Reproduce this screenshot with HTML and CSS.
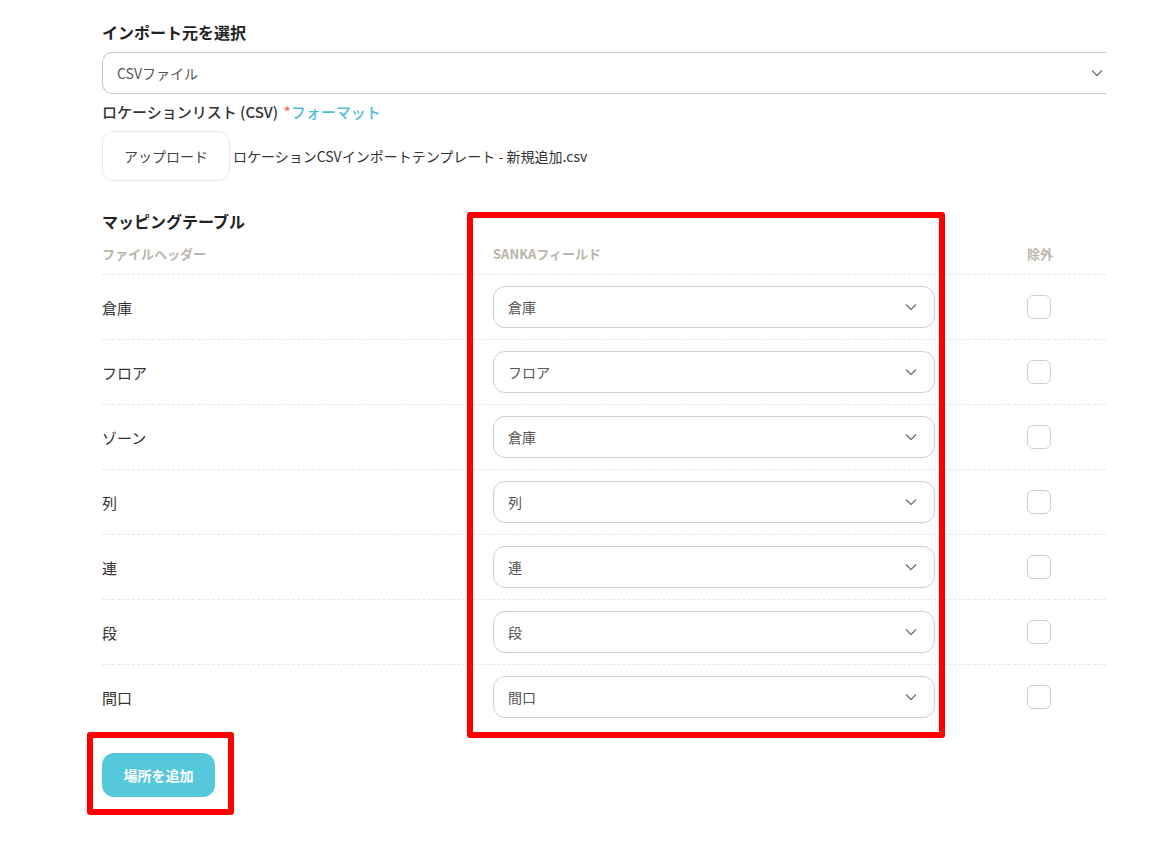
FILE: index.html
```html
<!DOCTYPE html>
<html lang="ja">
<head>
<meta charset="utf-8">
<link rel="stylesheet" href="styles.css">
</head>
<body>
<div class="page">
  <h2 class="title">インポート元を選択</h2>
  <div class="source-select">
    <span>CSVファイル</span>
    <svg class="chev" viewBox="0 0 12 8"><path d="M1 1.5 6 6.5 11 1.5"/></svg>
  </div>
  <div class="label">ロケーションリスト (CSV) <span class="req">*</span><span class="fmt">フォーマット</span></div>
  <div class="upload-row">
    <div class="upload-btn">アップロード</div>
    <span class="filename">ロケーションCSVインポートテンプレート - 新規追加.csv</span>
  </div>

  <section class="mapping">
    <h2 class="title map-title">マッピングテーブル</h2>
    <div class="grid head">
      <div>ファイルヘッダー</div>
      <div>SANKAフィールド</div>
      <div>除外</div>
    </div>
    <div class="grid row"><div class="name">倉庫</div><div class="sel"><span>倉庫</span><svg class="chev" viewBox="0 0 12 8"><path d="M1 1.5 6 6.5 11 1.5"/></svg></div><div><span class="check"></span></div></div>
    <div class="grid row"><div class="name">フロア</div><div class="sel"><span>フロア</span><svg class="chev" viewBox="0 0 12 8"><path d="M1 1.5 6 6.5 11 1.5"/></svg></div><div><span class="check"></span></div></div>
    <div class="grid row"><div class="name">ゾーン</div><div class="sel"><span>倉庫</span><svg class="chev" viewBox="0 0 12 8"><path d="M1 1.5 6 6.5 11 1.5"/></svg></div><div><span class="check"></span></div></div>
    <div class="grid row"><div class="name">列</div><div class="sel"><span>列</span><svg class="chev" viewBox="0 0 12 8"><path d="M1 1.5 6 6.5 11 1.5"/></svg></div><div><span class="check"></span></div></div>
    <div class="grid row"><div class="name">連</div><div class="sel"><span>連</span><svg class="chev" viewBox="0 0 12 8"><path d="M1 1.5 6 6.5 11 1.5"/></svg></div><div><span class="check"></span></div></div>
    <div class="grid row"><div class="name">段</div><div class="sel"><span>段</span><svg class="chev" viewBox="0 0 12 8"><path d="M1 1.5 6 6.5 11 1.5"/></svg></div><div><span class="check"></span></div></div>
    <div class="grid row"><div class="name">間口</div><div class="sel"><span>間口</span><svg class="chev" viewBox="0 0 12 8"><path d="M1 1.5 6 6.5 11 1.5"/></svg></div><div><span class="check"></span></div></div>
    <div class="mark mark-fields"></div>
  </section>

  <div class="actions">
    <button class="add-btn">場所を追加</button>
    <div class="mark mark-btn"></div>
  </div>
</div>
</body>
</html>
```

FILE: styles.css
```css
* { box-sizing: border-box; }
html, body { margin: 0; background: #fff; }
body {
  font-family: "Noto Sans CJK JP", "Noto Sans", sans-serif;
  color: #333;
}
.page {
  width: 1106px;
  padding: 21px 0 40px 102px;
}
.title {
  margin: 0;
  font-size: 16px;
  line-height: 22px;
  font-weight: 700;
  color: #222;
}
.source-select {
  margin-top: 9px;
  height: 42px;
  border: 1px solid #c9c9c9;
  border-right: none;
  border-radius: 10px 0 0 10px;
  display: flex;
  align-items: center;
  justify-content: space-between;
  padding: 0 3px 0 14px;
  font-size: 14px;
  color: #555;
}
.chev {
  width: 12px;
  height: 8px;
  fill: none;
  stroke: #777;
  stroke-width: 1.4;
}
.label {
  margin-top: 7px;
  font-size: 15px;
  line-height: 22px;
  color: #333;
  font-weight: 500;
}
.req { color: #ef6b4f; margin-left: 2px; }
.fmt { color: #4fbfd6; }
.upload-row {
  margin-top: 8px;
  display: flex;
  align-items: center;
  gap: 3px;
}
.upload-btn {
  width: 128px;
  height: 50px;
  border: 1px solid #e8e8e8;
  border-radius: 12px;
  display: flex;
  align-items: center;
  justify-content: center;
  font-size: 14px;
  color: #444;
}
.filename { font-size: 14px; color: #333; }

.mapping {
  position: relative;
  margin-top: 29px;
}
.map-title { line-height: 22px; }
.grid {
  display: grid;
  grid-template-columns: 391px 534px 1fr;
  align-items: center;
}
.head {
  height: 42px;
  font-size: 13px;
  font-weight: 700;
  color: #bcb6ab;
}
.row {
  height: 65px;
  border-top: 1px dashed #e6e6e6;
  font-size: 15px;
}
.name { color: #333; }
.sel {
  width: 442px;
  height: 42px;
  border: 1px solid #cfcfcf;
  border-radius: 12px;
  display: flex;
  align-items: center;
  justify-content: space-between;
  padding: 0 17px 0 14px;
  font-size: 14px;
  color: #555;
}
.check {
  display: block;
  width: 24px;
  height: 24px;
  border: 1.5px solid #cfcfcf;
  border-radius: 6px;
}
.mark {
  position: absolute;
  border: 6px solid #ff0000;
  border-radius: 3px;
  pointer-events: none;
}
.mark-fields {
  left: 365px;
  top: 2px;
  width: 478px;
  height: 526px;
}
.actions {
  position: relative;
  margin-top: 24px;
}
.add-btn {
  width: 113px;
  height: 44px;
  border: none;
  border-radius: 12px;
  background: #55c8db;
  color: #fff;
  font-family: inherit;
  font-size: 14px;
  font-weight: 700;
}
.mark-btn {
  left: -15px;
  top: -21px;
  width: 147px;
  height: 83px;
}
```
